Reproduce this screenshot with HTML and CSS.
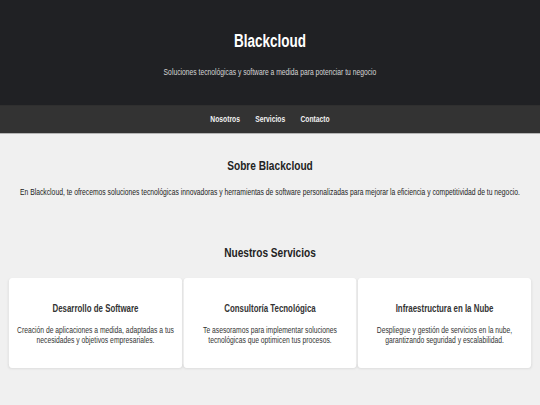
FILE: index.html
```html
<!DOCTYPE html>
<html lang="es">
<head>
<meta charset="utf-8">
<title>Blackcloud</title>
<link rel="stylesheet" href="styles.css">
</head>
<body>
<div class="page">
  <div class="top">
    <header class="hero">
      <h1 class="hero-title">Blackcloud</h1>
      <p class="hero-sub">Soluciones tecnológicas y software a medida para potenciar tu negocio</p>
    </header>
    <nav class="nav">
      <a class="nav-link" href="#nosotros">Nosotros</a>
      <a class="nav-link" href="#servicios">Servicios</a>
      <a class="nav-link" href="#contacto">Contacto</a>
    </nav>
  </div>
  <main class="main">
    <section class="section" id="nosotros">
      <h2 class="section-title section-title--about">Sobre Blackcloud</h2>
      <p class="section-text">En Blackcloud, te ofrecemos soluciones tecnológicas innovadoras y herramientas de software personalizadas para mejorar la eficiencia y competitividad de tu negocio.</p>
    </section>
    <section class="section" id="servicios">
      <h2 class="section-title section-title--cards">Nuestros Servicios</h2>
      <div class="cards">
        <div class="card">
          <h3 class="card-title">Desarrollo de Software</h3>
          <p class="card-text">Creación de aplicaciones a medida, adaptadas a tus necesidades y objetivos empresariales.</p>
        </div>
        <div class="card">
          <h3 class="card-title">Consultoría Tecnológica</h3>
          <p class="card-text">Te asesoramos para implementar soluciones tecnológicas que optimicen tus procesos.</p>
        </div>
        <div class="card">
          <h3 class="card-title">Infraestructura en la Nube</h3>
          <p class="card-text">Despliegue y gestión de servicios en la nube, garantizando seguridad y escalabilidad.</p>
        </div>
      </div>
    </section>
  </main>
</div>
</body>
</html>
```
FILE: styles.css
```css
html, body {
  margin: 0;
  padding: 0;
  overflow: hidden;
  background: #f0f0f0;
}

.page {
  width: 1280px;
  height: 720px;
  transform: scale(0.421875, 0.5625);
  transform-origin: 0 0;
  font-family: "Liberation Sans", Arial, sans-serif;
  font-size: 16px;
  color: #333;
  background: #f0f0f0;
  overflow: hidden;
}

.top {
  background: #333;
}

.hero {
  background: #202124;
  color: #fff;
  text-align: center;
  padding: 54px 20px 50px;
}

.hero-title {
  margin: 0 0 28px;
  font-size: 32px;
  font-weight: bold;
  line-height: 1.15;
}

.hero-sub {
  margin: 0;
  font-size: 16px;
  color: #d6d6d6;
}

.nav {
  display: flex;
  justify-content: center;
  gap: 36px;
  padding: 16px 0;
}

.nav-link {
  color: #f2f2f2;
  text-decoration: none;
  font-weight: bold;
  font-size: 16px;
  line-height: 1.15;
}

.main {
  display: flex;
  flex-direction: column;
  gap: 47px;
  padding: 23px 21px 0;
}

.section {
  text-align: center;
}

.section-title {
  margin: 20px 0 20px;
  font-size: 24px;
  font-weight: bold;
  color: #222;
}

.section-title--about {
  margin-bottom: 25px;
}

.section-title--cards {
  margin-bottom: 32px;
}

.section-text {
  margin: 0 0 16px;
  color: #222;
}

.cards {
  display: flex;
  gap: 3px;
}

.card {
  flex: 1;
  background: #fff;
  border-radius: 8px;
  box-shadow: 0 2px 5px rgba(0, 0, 0, 0.08);
  padding: 24px 18px;
}

.card-title {
  margin: 18.72px 0;
  font-size: 18.72px;
  font-weight: bold;
  color: #333;
}

.card-text {
  margin: 0 0 16px;
  color: #333;
}
```
